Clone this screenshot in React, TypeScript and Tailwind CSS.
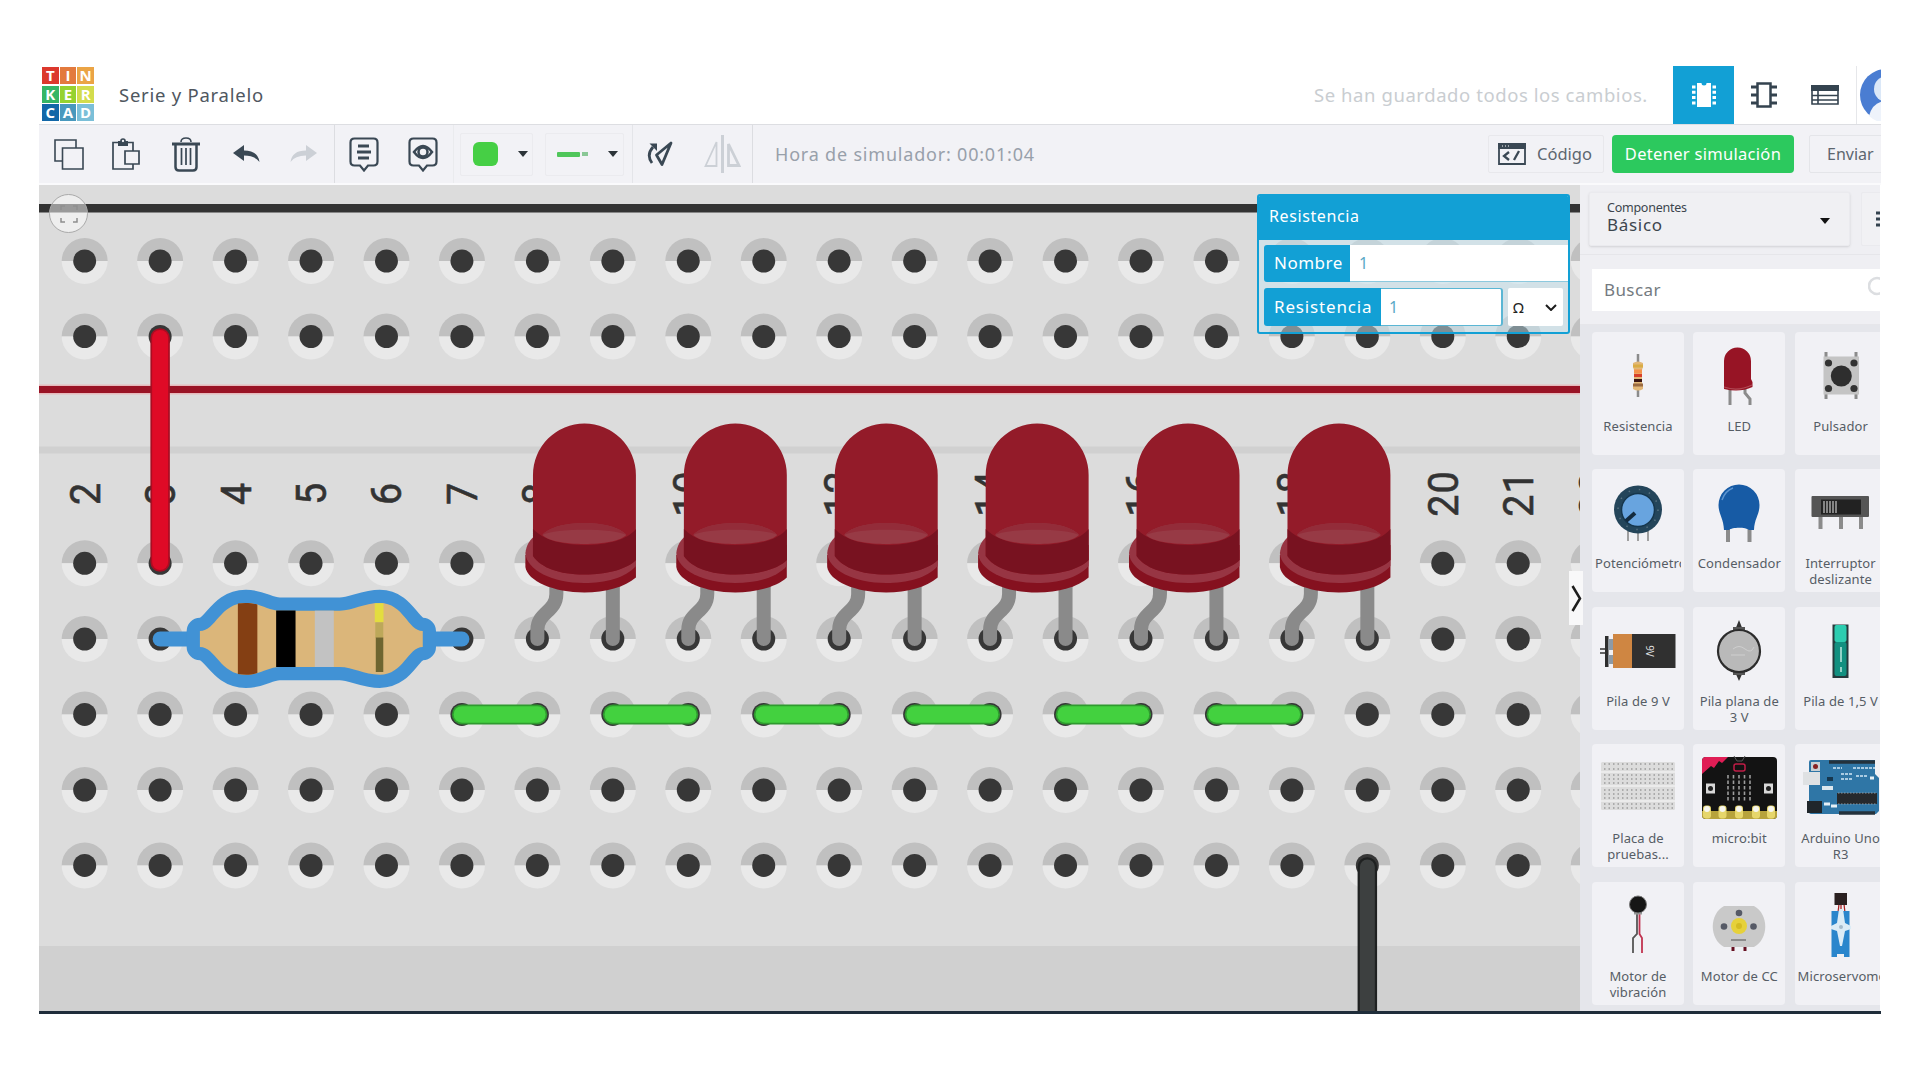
import React from "react";

const PITCH = 75.5;
const holeX = (i: number) => 84.7 + PITCH * i;
const columns = Array.from({ length: 21 }, (_, i) => i);
const rows = [261, 336.5, 563.3, 639, 714.4, 790, 865.4];

function Hole({ x, y }: { x: number; y: number }) {
  return (
    <g>
      <path d={`M${x - 23} ${y}a23 23 0 0 1 46 0z`} fill="#c0c0c0" />
      <path d={`M${x - 23} ${y}a23 23 0 0 0 46 0z`} fill="#e9e9e9" />
      <circle cx={x} cy={y} r="11.5" fill="#373737" />
    </g>
  );
}

function Led({ x }: { x: number }) {
  return (
    <g transform={`translate(${x} 0)`}>
      <path d="M19 585v9c0 18-19 18-19 36v9M75.5 585v54" fill="none" stroke="#8a8a8a" strokeWidth="14" strokeLinecap="round" />
      <path d="M-12 555V567C-10 581 16 592.500 47 592.500C68 592.500 88 587 98.600 577.500V545z" fill="#85111f" />
      <path d="M-12 553C-11 545 -8 541 -4 537L98.600 550V566C88 578 68 583 47 583C15 583 -11 570 -12 553z" fill="#973543" />
      <path d="M-4.400 475A51.500 51.500 0 0 1 98.600 475V560C90 569 70 574.500 47 574.500C22 574.500 4 568 -4.400 556z" fill="#931b29" />
      <path d="M-4.400 529C6 540 25 545 47 545C70 545 90 540 98.600 529V560C90 569 70 574.500 47 574.500C22 574.500 4 568 -4.400 556z" fill="#781220" />
      <path d="M5 535C18 519 76 519 89 535C78 547 16 547 5 535z" fill="#973a45" />
      <path d="M5 535C18 519 76 519 89 535C76 528 18 528 5 535z" fill="#932c39" />
    </g>
  );
}

const resistorBody =
  "M200 631C216 631 220 603 246 603C261 603 268 610.700 280 610.700H340C353 610.700 364 603 380 603C404 603 408 631 423 631V647C408 647 404 674.700 380 674.700C364 674.700 353 667 340 667H280C268 667 261 674.700 246 674.700C220 674.700 216 647 200 647z";

function Breadboard() {
  return (
    <svg className="block h-full w-full" viewBox="39 185 1542 826" preserveAspectRatio="none">
      <rect x="39" y="185" width="1542" height="826" fill="#dcdcdc" />
      <rect x="39" y="946" width="1542" height="65" fill="#d0d0d0" />
      <rect x="39" y="204" width="1542" height="8.500" fill="#333333" />
      <rect x="39" y="384.500" width="1542" height="10" fill="#e6b9bc" />
      <rect x="39" y="386" width="1542" height="7" fill="#991325" />
      <rect x="39" y="446.500" width="1542" height="7" fill="#d0d0d0" />
      {rows.map((y) => columns.map((i) => <Hole key={`${i}-${y}`} x={holeX(i)} y={y} />))}
      {columns.map((i) => (
        <text
          key={i}
          transform={`translate(${holeX(i) + 15} 493.500) rotate(-90) scale(0.92 1)`}
          textAnchor="middle"
          fontSize="43"
          fill="#333333"
          stroke="#333333"
          strokeWidth="0.6"
          className="font-['Roboto',sans-serif] tracking-[1px]"
        >
          {i + 2}
        </text>
      ))}
      {[5, 7, 9, 11, 13, 15].map((i) => (
        <g key={i} strokeLinecap="round">
          <path d={`M${holeX(i)} 714.400h${PITCH}`} stroke="#2f9a2f" strokeWidth="20" />
          <path d={`M${holeX(i)} 714.400h${PITCH}`} stroke="#43d13f" strokeWidth="16.500" />
        </g>
      ))}
      {[6, 8, 10, 12, 14, 16].map((i) => (
        <Led key={i} x={holeX(i)} />
      ))}
      <g strokeLinecap="round">
        <path d="M160.200 338V562" stroke="#a90d22" strokeWidth="19.500" />
        <path d="M160.200 338V562" stroke="#df0a26" strokeWidth="16" />
        <path d="M1368.200 867V1030" stroke="#1f2121" strokeWidth="19.500" />
        <path d="M1368.200 867V1030" stroke="#3d4040" strokeWidth="15" />
        <path d="M160.200 639H462.200" stroke="#4192d5" strokeWidth="15" />
      </g>
      <path d={resistorBody} fill="#4192d5" stroke="#4192d5" strokeWidth="26.500" strokeLinejoin="round" />
      <path d={resistorBody} fill="#dbb67a" />
      <path d="M238 603.500C245 602.500 252 603 257.500 604.500V673C252 675 245 675.300 238 674z" fill="#843f13" />
      <rect x="276.300" y="610.500" width="19.400" height="56.500" fill="#000" />
      <rect x="315" y="610.700" width="19" height="56.300" fill="#c2c2c2" />
      <rect x="375" y="603.300" width="8.700" height="19" fill="#e3dd3f" />
      <rect x="375.500" y="622.300" width="8" height="15.500" fill="#bda85a" />
      <rect x="376" y="637.500" width="7.500" height="34.500" fill="#6e6530" />
    </svg>
  );
}

const lead = { stroke: "#8b8b8b", strokeWidth: 3, fill: "none" };

function PartIcon({ name }: { name: string }) {
  switch (name) {
    case "Resistencia":
      return (
        <g>
          <path d="M46 22v43" stroke="#8b8b8b" strokeWidth="2.500" />
          <path d="M41 31q5-3 10 0v4l-1 3v13l1 3v3q-5 3-10 0v-3l1-3V38l-1-3z" fill="#e3b878" />
          <path d="M41 34h10" stroke="#d9ac45" strokeWidth="3" />
          <path d="M42 39.500h8" stroke="#f5924a" strokeWidth="4" />
          <path d="M42 43.500h8" stroke="#d8402a" strokeWidth="3" />
          <path d="M42 48.500h8" stroke="#3a1512" strokeWidth="3" />
          <path d="M41 53h10" stroke="#9a6a42" strokeWidth="3" />
        </g>
      );
    case "LED":
      return (
        <g>
          <path d="M37 56v17M52 56v5l5 6v6" {...lead} />
          <path d="M31 29a13.500 13.500 0 0 1 27 0v18l1.500 3v5q-13 6-28.500 2z" fill="#971425" />
          <path d="M31 55q14 5 28-2" stroke="#b04a55" fill="none" strokeWidth="1.200" />
        </g>
      );
    case "Pulsador":
      return (
        <g>
          <path d="M31 20v47M61 20v47" {...lead} />
          <rect x="28.500" y="24.500" width="35.500" height="38" fill="#c4c4c4" />
          <circle cx="46.300" cy="44" r="10.500" fill="#2e2e2e" />
          {[33.5, 59].map((x) => [31, 56.500].map((y) => <circle key={`${x}${y}`} cx={x} cy={y} r="3.600" fill="#333" />))}
        </g>
      );
    case "Potenciómetro":
      return (
        <g>
          <path d="M36 62v10M46 62v10M56 62v10" stroke="#8b8b8b" strokeWidth="1.600" />
          <circle cx="46" cy="40.500" r="24" fill="#24455a" />
          <circle cx="46" cy="40.500" r="20" fill="none" stroke="#56707f" strokeDasharray="1.500 9" strokeWidth="1.500" />
          <circle cx="46" cy="41" r="16.500" fill="#68a4df" stroke="#16364c" strokeWidth="1.500" />
          <path d="M43 44l-9 8" stroke="#142b3e" strokeWidth="4" />
        </g>
      );
    case "Condensador":
      return (
        <g>
          <path d="M35 56v17M56.500 56v17" {...lead} strokeWidth="4" />
          <path d="M25.500 36a20.500 20.500 0 0 1 41 0c0 10-5 13-5.500 25h-5c-3-3-17-3-20 0h-5C30.500 49 25.500 45 25.500 36z" fill="#175ba5" />
          <path d="M29 31q3-9 11-12" fill="none" stroke="#5c94cf" strokeWidth="1.500" />
        </g>
      );
    case "Interruptor deslizante":
      return (
        <g>
          <path d="M25.500 46v14M46 46v14M66 46v14" {...lead} strokeWidth="4" />
          <rect x="16.500" y="27" width="57.500" height="21" rx="1" fill="#555" />
          <rect x="26" y="30.500" width="40" height="15" fill="#222" />
          <path d="M29 32v12M32 32v12M35 32v12M38 32v12M41 32v12" stroke="#909090" strokeWidth="1.800" />
        </g>
      );
    case "Pila de 9 V":
      return (
        <g>
          <path d="M8 42h6M8 46h6" stroke="#333" strokeWidth="1.500" />
          <rect x="13" y="29" width="3.500" height="31" fill="#2d2d2d" />
          <rect x="16.500" y="32" width="5" height="11" fill="#8d9aa5" />
          <rect x="16.500" y="48" width="5" height="9" fill="#8d9aa5" />
          <rect x="21" y="27" width="19.500" height="34" fill="#cf8642" />
          <rect x="40" y="27" width="43.500" height="34" fill="#303030" />
          <text transform="translate(54 44) rotate(90)" textAnchor="middle" fontSize="10" fill="#ddd">9V</text>
        </g>
      );
    case "Pila plana de 3 V":
      return (
        <g>
          <path d="M42 23l4-10 4 10zM42 65l4 9 4-9z" fill="#333" />
          <path d="M40 20h12v48H40z" fill="#555" />
          <circle cx="46" cy="44" r="21" fill="#b9b9b9" stroke="#2c2c2c" strokeWidth="2.200" />
          <path d="M40 42q6-5 12 0t9-2M38 48h14" stroke="#cfcfcf" fill="none" />
        </g>
      );
    case "Pila de 1,5 V":
      return (
        <g>
          <rect x="37.500" y="17.500" width="16" height="53.500" fill="#263a3c" />
          <rect x="39.500" y="18" width="12" height="17" rx="2" fill="#2ccdb0" />
          <rect x="39.500" y="35" width="12" height="34" rx="2" fill="#129080" />
          <path d="M46 40v15M46 60v5" stroke="#bfe8e0" strokeWidth="1.500" />
        </g>
      );
    case "Placa de pruebas...":
      return (
        <g>
          <rect x="9" y="18" width="74" height="48" rx="1.500" fill="#dcdcdc" />
          <path d="M9 28h74M9 42h74M9 57h74" stroke="#efefef" strokeWidth="1.500" />
          {[20, 25, 31, 35, 39, 46, 50, 54, 60, 64].map((y) => (
            <path key={y} d={`M12 ${y}h69`} stroke="#9b9b9b" strokeWidth="1.300" strokeDasharray="1.500 3" />
          ))}
        </g>
      );
    case "micro:bit":
      return (
        <g>
          <rect x="9" y="13" width="75" height="62" rx="4" fill="#131313" />
          <path d="M9 30V17q0-4 4-4h22l-6 6-3-2-5 7-3-2z" fill="#e01d55" />
          <path d="M41 12l3 5h5l3-5" fill="none" stroke="#555" />
          <rect x="41" y="20" width="11" height="7" rx="2" fill="none" stroke="#c01d47" strokeWidth="1.500" />
          {[35, 40.500, 46, 51.500, 57].map((x) => (
            <path key={x} d={`M${x} 31v27`} stroke="#9c9c9c" strokeWidth="1.600" strokeDasharray="3.500 2" />
          ))}
          <rect x="13" y="39.500" width="9" height="10" fill="#d8d8d8" />
          <rect x="71" y="39.500" width="9" height="10" fill="#d8d8d8" />
          <circle cx="17.500" cy="44.500" r="2.500" fill="#222" />
          <circle cx="75.500" cy="44.500" r="2.500" fill="#222" />
          <path d="M9 67h75v5q0 3-4 3H13q-4 0-4-3z" fill="#b7a33c" />
          {[14, 29.500, 46, 63, 78].map((x) => (
            <g key={x}>
              <rect x={x - 4} y="61.500" width="8" height="13" rx="3" fill="#e6d66b" />
              <circle cx={x} cy="65" r="3" fill="#f5f5f0" />
            </g>
          ))}
        </g>
      );
    case "Arduino Uno R3":
      return (
        <g>
          <path d="M14 18q0-2 2-2h64v14l4 4v33l-3 3H16q-2 0-2-2z" fill="#2f76a6" />
          <path d="M34 18h46M44 69h36" stroke="#24323c" strokeWidth="3.500" />
          <rect x="8" y="28" width="17" height="13" fill="#dfe1e3" />
          <rect x="16" y="18" width="9" height="9" fill="#c9d0d4" />
          <circle cx="20.500" cy="22.500" r="2.500" fill="#822" />
          <rect x="12" y="57" width="15" height="12" fill="#20262b" />
          <rect x="27" y="42" width="11" height="4" fill="#dce7ee" />
          <rect x="32" y="33" width="6" height="4" fill="#16374e" />
          <path d="M42 49h40v11H42z" fill="#26292d" />
          <path d="M43 49h38M43 60h38" stroke="#8d9aa3" strokeDasharray="1.500 1.500" />
          <path d="M46 30h12M46 35h12M61 32h11M38 24h9M58 24h22" stroke="#a9cbe2" strokeWidth="2" strokeDasharray="3 1" />
          <path d="M29 60h6M36 62h6M75 34h4" stroke="#e6f0f6" strokeWidth="3" />
        </g>
      );
    case "Motor de vibración":
      return (
        <g fill="none">
          <path d="M45 30v22l-4 4v15" stroke="#555" strokeWidth="1.800" />
          <path d="M47.500 30v22l2.500 4v15" stroke="#c13450" strokeWidth="1.800" />
          <path d="M42 31h8" stroke="#999" strokeWidth="3" />
          <circle cx="46" cy="22.500" r="8.500" fill="#161616" stroke="#777" strokeWidth="1" />
        </g>
      );
    case "Motor de CC":
      return (
        <g>
          <path d="M40 63v6M52 63v6" stroke="#612" strokeWidth="3" />
          <path d="M31 24h30c15 8 15 33 0 41H31c-15-8-15-33 0-41z" fill="#c9c9c9" />
          <circle cx="46" cy="44" r="8" fill="#e6d13a" />
          <circle cx="46" cy="44" r="3" fill="#d4bc23" />
          <circle cx="46" cy="31" r="3.300" fill="#565a66" />
          <circle cx="31" cy="44.500" r="3.300" fill="#565a66" />
          <circle cx="60.500" cy="44.500" r="3.300" fill="#565a66" />
          <path d="M38 58h15" stroke="#777" strokeWidth="1.500" />
        </g>
      );
    default:
      return (
        <g>
          <path d="M44 22l-1 9M46 22v9M49 22l1 9" stroke="#a22" strokeWidth="1.300" />
          <rect x="39.500" y="11" width="12.500" height="12" fill="#2a2020" />
          <rect x="36.500" y="29" width="18" height="46" fill="#2a86cc" />
          <path d="M42 75v-3h7v3" fill="#f0f1f4" />
          <path d="M44 27h4l2 14 6 3v3l-6 2-3 15h-2l-3-15-6-2v-3l6-3z" fill="#dcecf6" />
          <circle cx="46" cy="45" r="2" fill="#a6bccb" />
        </g>
      );
  }
}

const parts: { name: string; lines: string[] }[] = [
  { name: "Resistencia", lines: ["Resistencia"] },
  { name: "LED", lines: ["LED"] },
  { name: "Pulsador", lines: ["Pulsador"] },
  { name: "Potenciómetro", lines: ["Potenciómetro"] },
  { name: "Condensador", lines: ["Condensador"] },
  { name: "Interruptor deslizante", lines: ["Interruptor", "deslizante"] },
  { name: "Pila de 9 V", lines: ["Pila de 9 V"] },
  { name: "Pila plana de 3 V", lines: ["Pila plana de", "3 V"] },
  { name: "Pila de 1,5 V", lines: ["Pila de 1,5 V"] },
  { name: "Placa de pruebas...", lines: ["Placa de", "pruebas..."] },
  { name: "micro:bit", lines: ["micro:bit"] },
  { name: "Arduino Uno R3", lines: ["Arduino Uno", "R3"] },
  { name: "Motor de vibración", lines: ["Motor de", "vibración"] },
  { name: "Motor de CC", lines: ["Motor de CC"] },
  { name: "Microservomotor", lines: ["Microservomotor"] },
];

function PartCard({ name, lines }: { name: string; lines: string[] }) {
  return (
    <div className="flex h-[123px] w-[92px] flex-col overflow-hidden rounded-[4px] bg-[#f1f1f5]">
      <svg className="h-[86px] w-[92px] shrink-0" viewBox="0 0 92 86">
        <PartIcon name={name} />
      </svg>
      <div
        className={`mx-[3px] overflow-hidden text-[13px] leading-[16px] tracking-[0.1px] whitespace-nowrap text-[#565d65] ${
          name === "Potenciómetro" || name === "Microservomotor" ? "text-left" : "text-center"
        }`}
      >
        {lines.map((l) => (
          <div key={l}>{l}</div>
        ))}
      </div>
    </div>
  );
}

function Sidebar() {
  return (
    <aside className="flex h-full w-[300px] shrink-0 flex-col overflow-hidden bg-[#efeff3]">
      <div className="flex h-[70px] w-[400px] gap-[11px] border-b border-[#e6e6ea] pt-[7px] pl-[9px]">
        <div className="flex h-[54px] w-[261px] justify-between rounded-[2px] border border-[#eaeaee] bg-[#f0f0f3] pt-[7px] pr-[19px] pl-[17px] shadow-sm">
          <div>
            <div className="text-[12.5px] leading-[15px] tracking-[-0.25px] text-[#3c454d]">Componentes</div>
            <div className="text-[17px] leading-[20px] tracking-[0.7px] text-[#3c454d]">Básico</div>
          </div>
          <svg className="mt-[18px] h-[6px] w-[10px]" viewBox="0 0 10 6"><path d="M0 0h10L5 6z" fill="#111" /></svg>
        </div>
        <div className="flex h-[54px] w-[50px] items-center rounded-[2px] border border-[#eaeaee] bg-[#f1f1f4] pl-[14px]">
          <svg className="h-[20px] w-[24px]" viewBox="0 0 24 20"><path d="M0 4h4M7 4h16M0 10h4M7 10h16M0 16h4M7 16h16" stroke="#34434f" strokeWidth="3" /></svg>
        </div>
      </div>
      <div className="h-[70px] w-[400px] border-b border-[#e6e6ea] pt-[14px] pl-[12px]">
        <div className="flex h-[42px] items-center gap-[207px] bg-white pl-[12px]">
          <span className="w-[57px] text-[17px] leading-[24px] tracking-[0.4px] text-[#747a80]">Buscar</span>
          <svg className="mb-[6px] h-[24px] w-[24px] shrink-0" viewBox="0 0 24 24"><circle cx="9" cy="11" r="8" fill="none" stroke="#dcdee1" strokeWidth="2.500" /><path d="M15 17l7 7" stroke="#dcdee1" strokeWidth="2.500" /></svg>
        </div>
      </div>
      <div className="grid w-[400px] flex-1 grid-cols-[92px_92px_92px] content-start gap-x-[9.3px] gap-y-[14.4px] bg-[#e5e6eb] pt-[7px] pl-[12px]">
        {parts.map((p) => (
          <PartCard key={p.name} {...p} />
        ))}
      </div>
    </aside>
  );
}

function Inspector() {
  return (
    <div className="absolute top-[9px] left-[1218px] flex h-[140px] w-[313px] flex-col overflow-hidden rounded-[3px] border-[2.5px] border-[#12a0d5] bg-[#c8e6f1]/50">
      <div className="h-[44px] shrink-0 bg-[#12a0d5] pl-[10px] text-[16px] leading-[41px] tracking-[0.6px] text-white">Resistencia</div>
      <div className="mt-[5px] ml-[5px] flex h-[37px] shrink-0">
        <div className="w-[86px] rounded-l-[3px] bg-[#12a0d5] pl-[10px] text-[17px] leading-[36px] tracking-[0.5px] text-white">Nombre</div>
        <div className="flex-1 border-b border-[#8cc9de] bg-white pl-[9px] text-[16px] leading-[36px] text-[#5aa9c6]">1</div>
      </div>
      <div className="mt-[6px] ml-[5px] flex h-[38px] shrink-0">
        <div className="w-[117px] rounded-l-[3px] bg-[#12a0d5] pl-[10px] text-[17px] leading-[37px] tracking-[0.85px] text-white">Resistencia</div>
        <div className="w-[122px] rounded-r-[3px] border-y border-r-2 border-[#5ab6d4] bg-white pl-[8px] text-[16px] leading-[36px] text-[#5aa9c6]">1</div>
        <div className="ml-[5px] flex w-[55px] items-center gap-[21px] rounded-[2px] bg-white pl-[5px] text-[15px] text-[#222]">
          <span>Ω</span>
          <svg className="h-[7px] w-[12px]" viewBox="0 0 12 7"><path d="M1 1l5 5 5-5" fill="none" stroke="#1c1c1c" strokeWidth="2" /></svg>
        </div>
      </div>
    </div>
  );
}

function Caret() {
  return <svg className="h-[6px] w-[10px]" viewBox="0 0 10 6"><path d="M0 0h10L5 6z" fill="#2c3338" /></svg>;
}

const tiles: [string, string][] = [
  ["T", "bg-[#dc382d]"], ["I", "bg-[#e37a3d]"], ["N", "bg-[#eba445]"],
  ["K", "bg-[#35b566]"], ["E", "bg-[#96d22f]"], ["R", "bg-[#d3dc4c]"],
  ["C", "bg-[#1267a8]"], ["A", "bg-[#4898bd]"], ["D", "bg-[#7bbfd8]"],
];

function Header() {
  return (
    <header className="flex h-[58px] w-[1900px] shrink-0 items-center bg-white">
      <div className="mb-[2px] ml-[3px] grid w-[52px] grid-cols-[16.5px_16.5px_16.5px] grid-rows-[17px_17px_17px] gap-x-[1.2px] gap-y-[1.5px]">
        {tiles.map(([c, bg]) => (
          <div key={c} className={`${bg} text-center font-['Open_Sans',sans-serif] text-[15px] leading-[17px] font-bold text-white`}>{c}</div>
        ))}
      </div>
      <div className="ml-[25px] w-[1195px] text-[18.5px] leading-[24px] tracking-[0.75px] text-[#4f575f]">Serie y Paralelo</div>
      <div className="w-[359px] text-[18.5px] leading-[24px] tracking-[0.57px] whitespace-nowrap text-[#c9cdd1]">Se han guardado todos los cambios.</div>
      <div className="flex h-full w-[61px] shrink-0 items-center justify-center bg-[#12a0d5]">
        <svg className="h-[26px] w-[24px]" viewBox="0 0 24 26">
          <path d="M0 5h24M0 10.300h24M0 15.600h24M0 21h24" stroke="#fff" strokeWidth="3" />
          <path d="M3.500 0h17v26h-17z" fill="#12a0d5" />
          <path d="M5 1h14v24H5z" fill="#fff" />
          <path d="M9.500 1a2.500 2.500 0 0 0 5 0z" fill="#12a0d5" />
        </svg>
      </div>
      <svg className="ml-[17px] h-[26px] w-[26px]" viewBox="0 0 26 26">
        <path d="M0 5h26M0 13h26M0 21h26" stroke="#34434f" strokeWidth="3" />
        <path d="M6.500 1.500h13v23h-13z" fill="#fff" stroke="#34434f" strokeWidth="2.500" />
      </svg>
      <svg className="ml-[34px] h-[20px] w-[28px]" viewBox="0 0 28 20">
        <path d="M1 1h26v18H1zM1 10.500h26M1 15h26M7 5v14" fill="none" stroke="#34434f" strokeWidth="1.600" />
        <path d="M0 0h28v6H0z" fill="#34434f" />
      </svg>
      <div className="ml-[17px] h-full w-px bg-[#e6e7ea]" />
      <svg className="ml-[3px] h-[52px] w-[52px] shrink-0" viewBox="0 0 52 52">
        <circle cx="26" cy="26" r="26" fill="#4a7dd2" />
        <circle cx="27" cy="20" r="13" fill="#dbe8f8" />
        <path d="M9 47q4-15 18-15t18 15q-8 7-18 7T9 47z" fill="#eef3fb" />
      </svg>
    </header>
  );
}

const ink = "#3a4854";

function Toolbar() {
  return (
    <div className="flex h-[61px] w-[1900px] shrink-0 items-center border-t border-b-2 border-t-[#dddee2] border-b-[#fafafc] bg-[#f2f2f6]">
      <svg className="ml-[15px] h-[31px] w-[30px]" viewBox="0 0 30 31" fill="#f2f2f6" stroke={ink} strokeWidth="1.600">
        <path d="M1 1h21v21H1z" />
        <path d="M8.500 9H29v21H8.500z" />
      </svg>
      <svg className="ml-[28px] h-[32px] w-[28px]" viewBox="0 0 28 32" fill="none" stroke={ink} strokeWidth="1.700">
        <path d="M1 4.500h20V31H1z" />
        <path d="M6 3h10v5H6z" fill={ink} stroke="none" />
        <circle cx="11" cy="3" r="2" fill="#f2f2f6" />
        <path d="M13 13h14v13H13z" fill="#f2f2f6" />
      </svg>
      <svg className="ml-[32px] h-[35px] w-[28px]" viewBox="0 0 28 35" fill="none" stroke={ink}>
        <path d="M9 5q0-4 5-4t5 4" strokeWidth="1.600" />
        <path d="M0 7h28" strokeWidth="3" />
        <path d="M3.500 8v22q0 3.500 3.500 3.500h14q3.500 0 3.500-3.500V8" strokeWidth="2.500" />
        <path d="M9.500 11v17M14 11v17M18.500 11v17" strokeWidth="1.700" />
      </svg>
      <svg className="ml-[33px] h-[18px] w-[27px]" viewBox="0 0 27 18"><path d="M0 8L11 0v5.500q14 0 15.500 11.500Q22 10.500 11 10.500V16z" fill={ink} /></svg>
      <svg className="ml-[30px] h-[18px] w-[27px]" viewBox="0 0 27 18"><path d="M27 8L16 0v5.500Q2 5.500.5 17 5 10.500 16 10.500V16z" fill="#ccd0d6" /></svg>
      <div className="ml-[17px] h-full w-px bg-[#dcdde1]" />
      <svg className="mt-[2px] ml-[14px] h-[36px] w-[30px]" viewBox="0 0 30 36" fill="none" stroke={ink} strokeWidth="2.200">
        <path d="M5.500 1.500h19q4 0 4 4v19q0 4-4 4H19l-4 5-4-5H5.500q-4 0-4-4v-19q0-4 4-4z" />
        <path d="M9 9h11M8 15h14M9 21h11" strokeWidth="2.800" />
      </svg>
      <svg className="mt-[2px] ml-[29px] h-[36px] w-[30px]" viewBox="0 0 30 36" fill="none" stroke={ink} strokeWidth="2.200">
        <path d="M5.500 1.500h19q4 0 4 4v19q0 4-4 4H19l-4 5-4-5H5.500q-4 0-4-4v-19q0-4 4-4z" />
        <path d="M6 15q9-12 18 0-9 12-18 0z" strokeWidth="2.500" />
        <circle cx="15" cy="15" r="4.500" strokeWidth="2.500" />
      </svg>
      <div className="ml-[15px] h-full w-px bg-[#eaebee]" />
      <div className="ml-[6px] flex h-[43px] w-[73px] items-center gap-[20px] rounded-[2px] border border-[#ebebef] pl-[12px]">
        <div className="h-[24px] w-[25px] rounded-[6px] bg-[#46cf45]" />
        <Caret />
      </div>
      <div className="ml-[12px] flex h-[43px] w-[79px] items-center rounded-[2px] border border-[#ebebef] pl-[11px]">
        <div className="h-[5px] w-[23px] rounded-[1px] bg-[#4fc65a]" />
        <div className="ml-[2px] h-[4px] w-[6px] bg-[#89c795]" />
        <div className="ml-[20px]"><Caret /></div>
      </div>
      <div className="ml-[8px] h-full w-px bg-[#e4e5e9]" />
      <svg className="ml-[14px] h-[26px] w-[26px]" viewBox="0 0 26 26" fill="none" stroke={ink}>
        <path d="M24 2L9.500 14l5.500 9.500z" strokeWidth="2.800" strokeLinejoin="round" />
        <path d="M5 22q-6-8 1-16" strokeWidth="2.800" />
        <path d="M2.500 2.500H10V10z" fill={ink} stroke="none" />
      </svg>
      <svg className="ml-[31px] h-[38px] w-[37px]" viewBox="0 0 37 38" fill="none" stroke="#ccd0d6">
        <path d="M18.500 0v38" strokeWidth="3" />
        <path d="M12.500 7v24H1.500z" strokeWidth="1.800" />
        <path d="M24.500 9v21.500h10.500z" strokeWidth="2.800" />
      </svg>
      <div className="ml-[11px] h-full w-px bg-[#dcdde1]" />
      <div className="ml-[22px] w-[713px] text-[18px] leading-[24px] tracking-[0.8px] whitespace-nowrap text-[#98a0aa]">Hora de simulador: 00:01:04</div>
      <div className="flex h-[38px] w-[116px] items-center gap-[11px] rounded-[2px] border border-[#e8e8ec] pl-[9px]">
        <svg className="h-[22px] w-[28px]" viewBox="0 0 28 22" fill="none" stroke={ink} strokeWidth="1.800">
          <path d="M1 1h26v20H1z" />
          <path d="M1 1h26v4H1z" fill={ink} />
          <path d="M4 3h1M7 3h1M10 3h1" stroke="#fff" strokeWidth="1.200" />
          <path d="M11 9l-5 4 5 4M16 17l5-9" strokeWidth="2.300" />
        </svg>
        <span className="text-[16.5px] leading-[24px] text-[#5d666f]">Código</span>
      </div>
      <div className="ml-[8px] flex h-[38px] w-[182px] items-center justify-center rounded-[4px] bg-[#2cc95e] text-[16.5px] tracking-[0.3px] whitespace-nowrap text-white">Detener simulación</div>
      <div className="ml-[15px] flex h-[38px] w-[100px] items-center rounded-[2px] border border-[#e4e5e9] pl-[17px] text-[16px] text-[#5d666f]">Enviar</div>
    </div>
  );
}

export default function App() {
  return (
    <div className="h-[1080px] w-[1920px] overflow-hidden bg-white pt-[66px] pl-[39px] font-['Noto_Sans',sans-serif]">
      <div className="flex h-[948px] w-[1842px] flex-col overflow-hidden">
        <Header />
        <Toolbar />
        <main className="flex h-[826px] shrink-0">
          <section className="relative h-full w-[1541px] shrink-0">
            <Breadboard />
            <div className="absolute top-[9px] left-[10px] flex size-[39px] items-center justify-center rounded-full border border-[#aaaaaa] bg-white/50">
              <svg className="size-[18px]" viewBox="0 0 18 18" fill="none" stroke="#8e8e8e" strokeWidth="1.500"><path d="M1 5V1h4M13 1h4v4M17 13v4h-4M5 17H1v-4" /></svg>
            </div>
            <Inspector />
            <div className="absolute top-[386px] left-[1530px] flex h-[54px] w-[14px] items-center justify-center bg-[#f8f8f9]">
              <svg className="h-[27px] w-[11px]" viewBox="0 0 11 27"><path d="M1.500 1l7.500 12.500L1.500 26" fill="none" stroke="#1d1d1d" strokeWidth="2.500" /></svg>
            </div>
          </section>
          <Sidebar />
        </main>
        <div className="h-[3px] shrink-0 bg-[#1f2d3a]" />
      </div>
    </div>
  );
}
